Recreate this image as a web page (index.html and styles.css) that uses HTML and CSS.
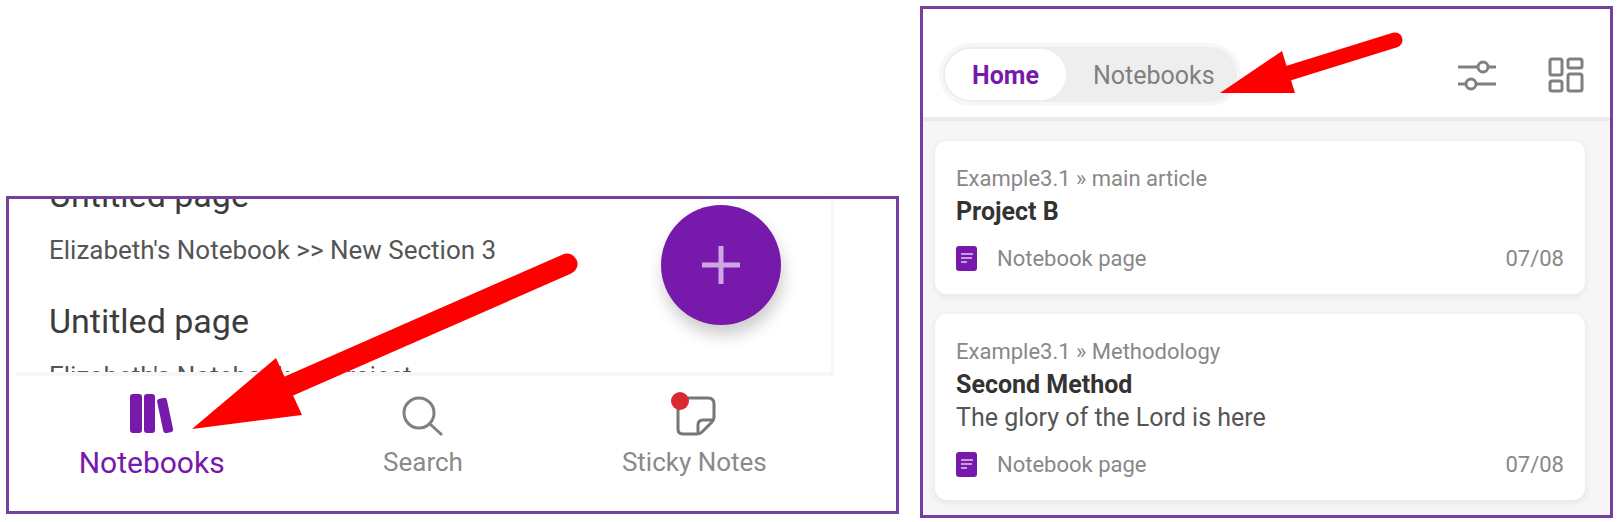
FILE: index.html
```
<!DOCTYPE html>
<html lang="en">
<head>
<meta charset="utf-8">
<title>Notebooks</title>
<link rel="stylesheet" href="styles.css">
</head>
<body>
<main class="screens">
  <section class="panel panel-recent">
    <div class="recent">
      <article class="entry">
        <h2 class="entry-title">Untitled page</h2>
        <p class="entry-path">Elizabeth's Notebook &gt;&gt; New Section 3</p>
      </article>
      <article class="entry">
        <h2 class="entry-title">Untitled page</h2>
        <p class="entry-path">Elizabeth's Notebook &gt;&gt; Project</p>
      </article>
      <button class="fab" type="button" aria-label="New page">
        <svg width="40" height="40" viewBox="0 0 40 40"><path d="M20 1v38M1 20h38" stroke="#cda6e3" stroke-width="5"/></svg>
      </button>
    </div>
    <nav class="tabs">
      <a class="tab tab-current" href="#notebooks">
        <svg class="tab-icon" width="44" height="44" viewBox="0 0 44 44" fill="#7719aa"><rect x="0" y="3" width="12" height="39" rx="3"/><rect x="14" y="3" width="11" height="39" rx="3"/><rect x="30" y="7" width="10" height="35" rx="3" transform="rotate(-12 35 24)"/></svg>
        <span class="tab-label">Notebooks</span>
      </a>
      <a class="tab" href="#search">
        <svg class="tab-icon" width="44" height="44" viewBox="0 0 44 44" fill="none" stroke="#808080" stroke-width="3"><circle cx="18" cy="22" r="15"/><path d="M29 33l12 11"/></svg>
        <span class="tab-label">Search</span>
      </a>
      <a class="tab" href="#sticky-notes">
        <svg class="tab-icon" width="44" height="44" viewBox="0 0 44 44" fill="none" stroke="#777" stroke-width="3" stroke-linejoin="round"><path d="M6 12v26q0 5 5 5h14q3 0 5-2l10-10q2-2 2-5V13q0-6-6-6H11"/><path d="M26 43V34q0-5 5-5h11"/><circle cx="8" cy="10" r="9" fill="#d92b2f" stroke="none"/></svg>
        <span class="tab-label">Sticky Notes</span>
      </a>
    </nav>
    <svg class="arrow arrow-large" width="390" height="190" viewBox="0 0 390 190"><path d="M97 143L375 21" stroke="#f00" stroke-width="21" stroke-linecap="round"/><path d="M0 186L84 115 110 172z" fill="#f00"/></svg>
  </section>

  <section class="panel panel-home">
    <header class="bar">
      <div class="switch">
        <button class="switch-item switch-on" type="button">Home</button>
        <button class="switch-item" type="button">Notebooks</button>
      </div>
      <div class="actions">
        <button class="action" type="button" aria-label="Filter">
          <svg width="38" height="36" viewBox="0 0 38 36" fill="none" stroke="#808080" stroke-width="3"><path d="M0 10h20M30 10h8M0 27h8M18 27h20"/><circle cx="25" cy="10" r="5"/><circle cx="13" cy="27" r="5"/></svg>
        </button>
        <button class="action" type="button" aria-label="Layout">
          <svg width="36" height="36" viewBox="0 0 36 36" fill="none" stroke="#808080" stroke-width="3"><rect x="2" y="2" width="12" height="16" rx="2"/><rect x="20" y="2" width="14" height="9" rx="2"/><rect x="2" y="24" width="12" height="10" rx="2"/><rect x="20" y="17" width="14" height="17" rx="2"/></svg>
        </button>
      </div>
    </header>
    <div class="cards">
      <article class="card">
        <p class="crumb">Example3.1 » main article</p>
        <h2 class="card-title">Project B</h2>
        <footer class="meta">
          <svg width="21" height="25" viewBox="0 0 21 25"><rect width="21" height="25" rx="3" fill="#7719aa"/><path d="M5 8h12M5 12h11M5 16h6" stroke="#c79be0" stroke-width="2"/></svg>
          <span>Notebook page</span>
          <time class="date">07/08</time>
        </footer>
      </article>
      <article class="card">
        <p class="crumb">Example3.1 » Methodology</p>
        <h2 class="card-title">Second Method</h2>
        <p class="card-text">The glory of the Lord is here</p>
        <footer class="meta">
          <svg width="21" height="25" viewBox="0 0 21 25"><rect width="21" height="25" rx="3" fill="#7719aa"/><path d="M5 8h12M5 12h11M5 16h6" stroke="#c79be0" stroke-width="2"/></svg>
          <span>Notebook page</span>
          <time class="date">07/08</time>
        </footer>
      </article>
    </div>
    <svg class="arrow arrow-small" width="190" height="70" viewBox="0 0 190 70"><path d="M69 43L175 10" stroke="#f00" stroke-width="15" stroke-linecap="round"/><path d="M0 63L62 21 75 63z" fill="#f00"/></svg>
  </section>
</main>
</body>
</html>
```
FILE: styles.css
```
* { box-sizing: border-box; }

body {
  margin: 0;
  background: #fff;
  color: #444;
  font-family: Roboto, "Liberation Sans", sans-serif;
  font-size: 25px;
  line-height: 33px;
}

h2, p { margin: 0; font-weight: 400; }

button {
  border: 0;
  padding: 0;
  background: none;
  color: inherit;
  font: inherit;
}

.screens {
  display: grid;
  grid-template-columns: 893fr 693fr;
  align-items: end;
  gap: 21px;
  padding: 6px 8px 6px 6px;
}

.panel {
  position: relative;
  min-width: 0;
  border: 3px solid #7440a0;
}

.panel-recent {
  margin-bottom: 4px;
  padding: 0 62px 32px 7px;
}

.panel-home { background: #f6f6f6; }

/* Recent pages */
.recent {
  position: relative;
  height: 177px;
  display: flex;
  flex-direction: column;
  gap: 32px;
  padding-left: 33px;
  border-right: 3px solid #f7f7f9;
  border-bottom: 4px solid #f7f7f9;
  overflow: hidden;
}

.entry:first-child { margin-top: -26px; }
.entry-title { color: #3c3c3c; font-size: 34px; line-height: 44px; }
.entry-path { margin-top: 17px; color: #555; font-size: 26px; }

.fab {
  position: absolute;
  top: 6px;
  right: 50px;
  width: 120px;
  height: 120px;
  display: grid;
  place-items: center;
  border-radius: 50%;
  background: #7719aa;
  box-shadow: 2px 10px 16px rgba(0, 0, 0, 0.2);
}

.tabs {
  display: grid;
  grid-template-columns: repeat(3, 1fr);
  padding: 15px 4px 0 0;
}

.tab {
  display: flex;
  flex-direction: column;
  align-items: center;
  gap: 11px;
  color: #8a8a8a;
  font-size: 26px;
  text-decoration: none;
}

.tab-current { color: #7719aa; }
.tab-current .tab-label { font-size: 30px; }
.tab-icon { overflow: visible; }

/* Home feed */
.bar {
  display: flex;
  align-items: center;
  justify-content: space-between;
  padding: 34px 26px 11px 16px;
  border-bottom: 4px solid #eaeaea;
  background: #fff;
}

.switch {
  display: flex;
  padding: 2px;
  border: 4px solid #f7f7f7;
  border-radius: 32px;
  background: #eee;
}

.switch-item {
  height: 51px;
  padding: 2px 20px 0 27px;
  border-radius: 26px;
  color: #808080;
}

.switch-on {
  padding: 2px 27px 0;
  background: #fff;
  color: #7719aa;
  font-weight: 700;
}

.actions { display: flex; gap: 52px; }
.action { display: flex; }

.cards {
  display: grid;
  gap: 20px;
  padding: 20px 25px 15px 12px;
}

.card {
  padding: 21px 21px 19px;
  border-radius: 12px;
  background: #fff;
  box-shadow: 0 2px 4px 2px #ebebeb;
}

.crumb { color: #888; font-size: 22px; }
.card-title { color: #333; font-size: 25px; font-weight: 700; }
.card-text { color: #555; }

.meta {
  display: flex;
  align-items: center;
  gap: 20px;
  margin-top: 14px;
  color: #888;
  font-size: 22px;
}

.date { margin-left: auto; }

/* Pointers drawn over the panels */
.arrow { position: absolute; fill: none; pointer-events: none; }
.arrow-large { left: 183px; top: 44px; }
.arrow-small { left: 297px; top: 21px; }
```
